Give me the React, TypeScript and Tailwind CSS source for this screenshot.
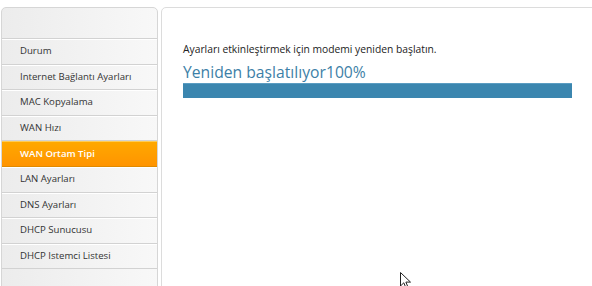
import React from "react";

const items = [
  "Durum",
  "Internet Bağlantı Ayarları",
  "MAC Kopyalama",
  "WAN Hızı",
  "WAN Ortam Tipi",
  "LAN Ayarları",
  "DNS Ayarları",
  "DHCP Sunucusu",
  "DHCP Istemci Listesi",
];

const active = "WAN Ortam Tipi";

export default function App() {
  return (
    <div
      className="relative w-[592px] h-[286px] overflow-hidden bg-white flex gap-[3px] pt-[7px] pl-[1px]"
      style={{ fontFamily: '"Open Sans", "DejaVu Sans", sans-serif' }}
    >
      {/* Sidebar menu */}
      <div className="w-[157px] shrink-0 h-[300px] rounded-t-[5px] border border-[#d6d6d6] bg-gradient-to-r from-[#ececec] to-[#f8f8f8] overflow-hidden flex flex-col">
        <div className="h-[31px] shrink-0 border-b border-[#d2d2d2]" />
        {items.map((label) => (
          <div
            key={label}
            className={
              label === active
                ? "h-[25.6px] shrink-0 flex items-center pl-[18px] text-[9.6px] font-semibold text-white bg-gradient-to-b from-[#ffa800] to-[#ff9400] border-t border-[#ffcc55] border-b border-b-[#e08a00]"
                : "h-[25.6px] shrink-0 flex items-center pl-[18px] text-[9.6px] text-[#333] border-b border-[#d2d2d2] shadow-[inset_0_1px_0_#ffffff]"
            }
          >
            {label}
          </div>
        ))}
      </div>

      {/* Main panel */}
      <div className="flex-1 h-[300px] rounded-tl-[5px] border border-[#dcdcdc] pl-[21px] pr-[20px] pt-[35px]">
        <p className="text-[10.3px] leading-[12px] text-[#222]">
          Ayarları etkinleştirmek için modemi yeniden başlatın.
        </p>
        <h2 className="mt-[7px] text-[15.7px] leading-[20px] text-[#3d7fa7]">
          Yeniden başlatılıyor100%
        </h2>
        <div className="mt-[1px] h-[15px] w-[389px] bg-[#3b86af] border-t border-[#5b9dc2]" />
      </div>

      {/* mouse pointer */}
      <svg
        className="absolute left-[400px] top-[272px]"
        width="12"
        height="18"
        viewBox="0 0 12 18"
      >
        <path
          d="M0.5 0.5 L0.5 14 L3.8 10.8 L6.2 16.5 L8.2 15.6 L5.9 10.1 L10.5 10.1 Z"
          fill="#ffffff"
          stroke="#222"
          strokeWidth="1"
        />
      </svg>
    </div>
  );
}
